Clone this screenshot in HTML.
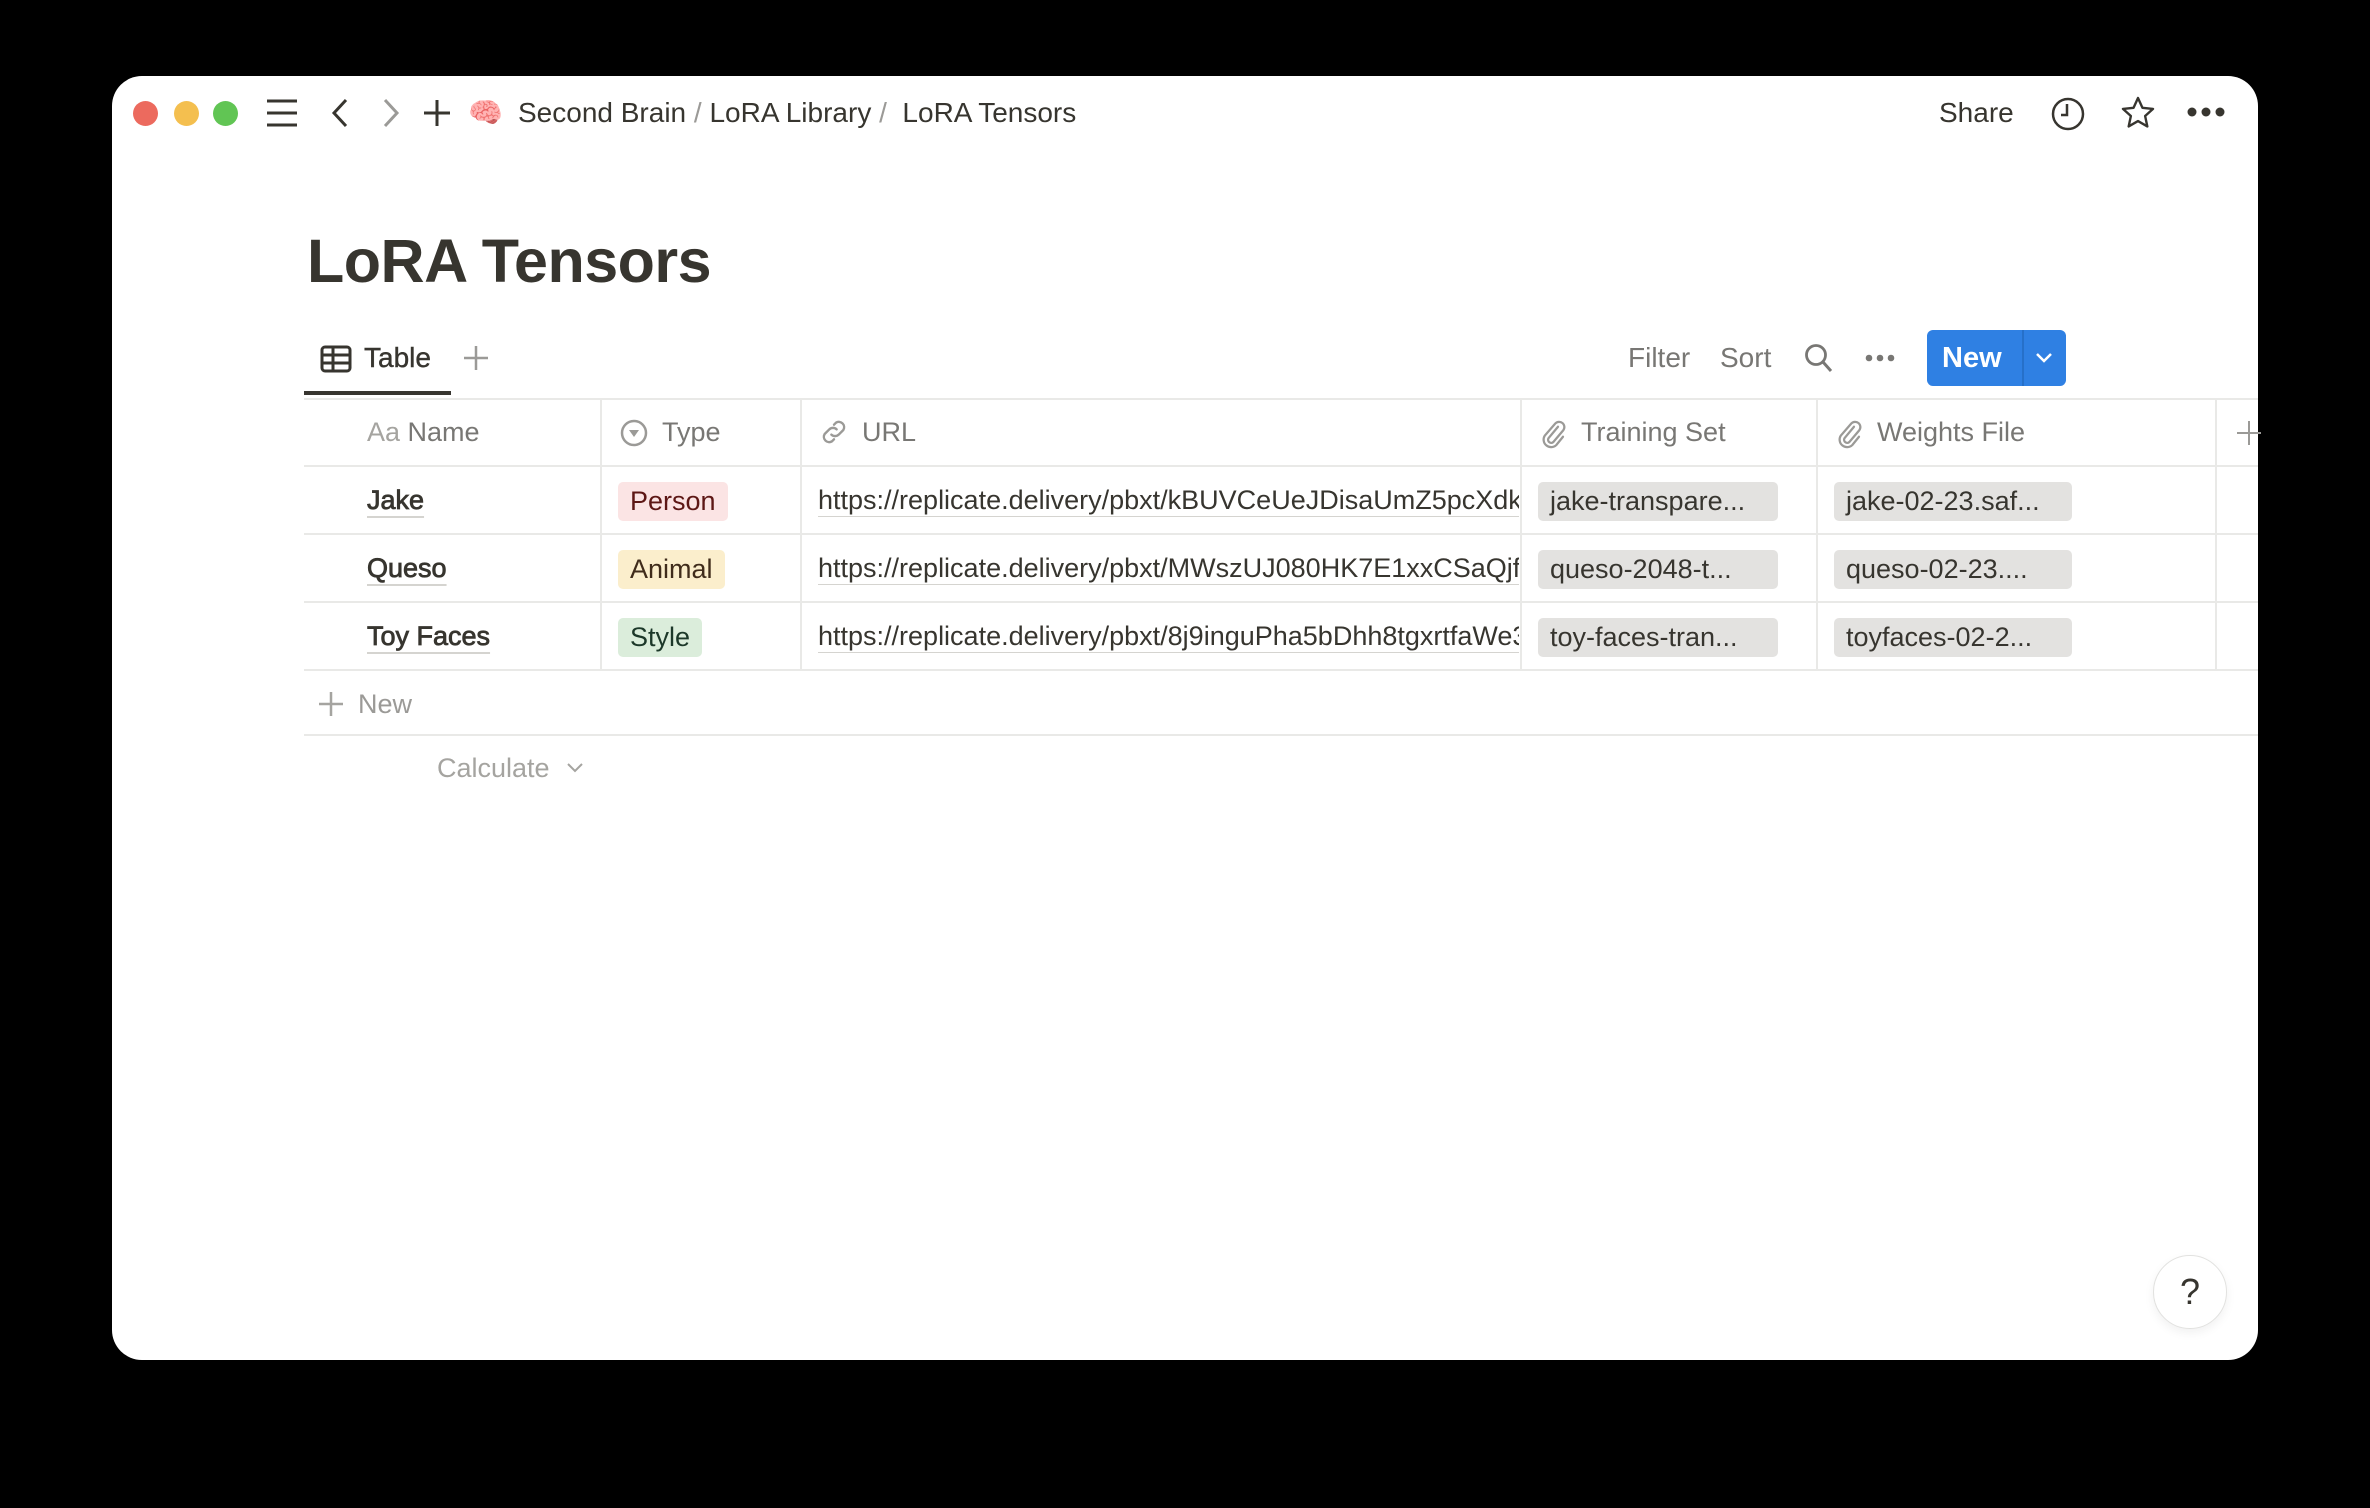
<!DOCTYPE html>
<html><head><meta charset="utf-8"><style>
*{margin:0;padding:0;box-sizing:border-box}
body{width:2370px;height:1508px;background:#000;position:relative;overflow:hidden;font-family:"Liberation Sans",sans-serif;color:#37352f}
#win{position:absolute;left:112px;top:76px;width:2146px;height:1284px;background:#fff;border-radius:30px;overflow:hidden}
.a{position:absolute;white-space:nowrap}
.dot{position:absolute;width:25px;height:25px;border-radius:50%;top:101px}
.t{font-size:28px;line-height:34px}
.hl{position:absolute;background:#e9e9e7}
.pill{position:absolute;height:39px;border-radius:5px;font-size:27px;line-height:39px;padding:0 12px}
.cell{font-size:27px;line-height:34px}
.nm{-webkit-text-stroke:0.8px #37352f;text-decoration:underline;text-decoration-color:#d5d4d0;text-decoration-thickness:2px;text-underline-offset:7px}
.url{text-decoration:underline;text-decoration-color:#d5d4d0;text-decoration-thickness:2px;text-underline-offset:7px;overflow:hidden;width:701px}
.hd{font-size:27px;color:#787774;line-height:34px}
</style></head><body>
<div id="win"></div>
<div class="dot" style="left:133px;background:#ec6a5e"></div>
<div class="dot" style="left:174px;background:#f4bf4f"></div>
<div class="dot" style="left:213px;background:#61c554"></div>
<svg class="a" style="left:265px;top:98px" width="34" height="30" viewBox="0 0 34 30"><path d="M2 3h30M2 15h30M2 27h30" stroke="#37352f" stroke-width="3"/></svg>
<svg class="a" style="left:330px;top:97px" width="20" height="32"><path d="M16 3L4 16l12 13" stroke="#37352f" stroke-width="3" fill="none"/></svg>
<svg class="a" style="left:381px;top:97px" width="20" height="32"><path d="M4 3l12 13L4 29" stroke="#9b9a97" stroke-width="3" fill="none"/></svg>
<svg class="a" style="left:422px;top:98px" width="30" height="30"><path d="M15 2v26M2 15h26" stroke="#37352f" stroke-width="3"/></svg>
<div class="a" style="left:468px;top:97px;font-size:28px;line-height:32px">🧠</div>
<div class="a t" style="left:518px;top:96px">Second Brain <span style="color:#9b9a97">/</span> LoRA Library <span style="color:#9b9a97">/</span>&nbsp; LoRA Tensors</div>
<div class="a t" style="left:1939px;top:96px">Share</div>
<svg class="a" style="left:2050px;top:96px" width="36" height="36"><circle cx="18" cy="18" r="15" stroke="#37352f" stroke-width="2.5" fill="none"/><path d="M17 8v11h-6" stroke="#37352f" stroke-width="2.5" fill="none"/></svg>
<svg class="a" style="left:2119px;top:94px" width="38" height="38" viewBox="0 0 24 24"><path d="M12 2.5l2.8 6.2 6.7.7-5 4.5 1.4 6.6L12 17.1l-5.9 3.4 1.4-6.6-5-4.5 6.7-.7z" stroke="#37352f" stroke-width="1.5" fill="none" stroke-linejoin="round"/></svg>
<svg class="a" style="left:2186px;top:106px" width="40" height="12"><circle cx="6" cy="6" r="4.5" fill="#37352f"/><circle cx="20" cy="6" r="4.5" fill="#37352f"/><circle cx="34" cy="6" r="4.5" fill="#37352f"/></svg>
<div class="a" style="left:307px;top:223px;font-size:61px;font-weight:bold;line-height:76px;letter-spacing:-0.5px">LoRA Tensors</div>
<svg class="a" style="left:320px;top:345px" width="32" height="28"><rect x="2" y="2" width="28" height="24" rx="3" stroke="#37352f" stroke-width="3" fill="none"/><path d="M2 10h28M2 18h28M13 2v24" stroke="#37352f" stroke-width="3"/></svg>
<div class="a" style="left:364px;top:341px;font-size:28px;line-height:34px;-webkit-text-stroke:0.4px #37352f">Table</div>
<svg class="a" style="left:463px;top:345px" width="26" height="26"><path d="M13 1v24M1 13h24" stroke="#9b9a97" stroke-width="2.5"/></svg>
<div class="hl" style="left:304px;top:391px;width:147px;height:4px;background:#37352f"></div>
<div class="a" style="left:1628px;top:341px;font-size:28px;line-height:34px;color:#787774">Filter</div>
<div class="a" style="left:1720px;top:341px;font-size:28px;line-height:34px;color:#787774">Sort</div>
<svg class="a" style="left:1804px;top:343px" width="30" height="32"><circle cx="12" cy="12" r="9.5" stroke="#787774" stroke-width="2.8" fill="none"/><path d="M19 19l8 9" stroke="#787774" stroke-width="3"/></svg>
<svg class="a" style="left:1865px;top:353px" width="30" height="10"><circle cx="4" cy="5" r="3.3" fill="#787774"/><circle cx="15" cy="5" r="3.3" fill="#787774"/><circle cx="26" cy="5" r="3.3" fill="#787774"/></svg>
<div class="a" style="left:1927px;top:330px;width:139px;height:56px;background:#2f80e3;border-radius:6px"></div>
<div class="a" style="left:2022px;top:330px;width:2px;height:56px;background:#2670c9"></div>
<div class="a" style="left:1942px;top:341px;font-size:29px;line-height:34px;color:#fff;font-weight:bold">New</div>
<svg class="a" style="left:2034px;top:351px" width="20" height="14"><path d="M3 3l7 7 7-7" stroke="#fff" stroke-width="2.5" fill="none"/></svg>
<div class="hl" style="left:304px;top:398px;width:1954px;height:2px"></div>
<div class="hl" style="left:304px;top:465px;width:1954px;height:2px"></div>
<div class="hl" style="left:304px;top:533px;width:1954px;height:2px"></div>
<div class="hl" style="left:304px;top:601px;width:1954px;height:2px"></div>
<div class="hl" style="left:304px;top:669px;width:1954px;height:2px"></div>
<div class="hl" style="left:304px;top:734px;width:1954px;height:2px"></div>
<div class="hl" style="left:600px;top:398px;width:2px;height:273px"></div>
<div class="hl" style="left:800px;top:398px;width:2px;height:273px"></div>
<div class="hl" style="left:1520px;top:398px;width:2px;height:273px"></div>
<div class="hl" style="left:1816px;top:398px;width:2px;height:273px"></div>
<div class="hl" style="left:2215px;top:398px;width:2px;height:273px"></div>
<div class="a hd" style="left:367px;top:415px"><span style="color:#a5a4a0">Aa</span> Name</div>
<svg class="a" style="left:619px;top:418px" width="30" height="30"><circle cx="15" cy="15" r="12" stroke="#9b9a97" stroke-width="2.5" fill="none"/><path d="M10 12h10l-5 7z" fill="#9b9a97"/></svg>
<div class="a hd" style="left:662px;top:415px">Type</div>
<svg class="a" style="left:818px;top:416px" width="32" height="32" viewBox="0 0 24 24"><path d="M10 14a4 4 0 0 0 5.5 0l3.5-3.5a4 4 0 0 0-5.5-5.5L12 6.5M14 10a4 4 0 0 0-5.5 0L5 13.5a4 4 0 0 0 5.5 5.5L12 17.5" stroke="#9b9a97" stroke-width="1.8" fill="none" stroke-linecap="round"/></svg>
<div class="a hd" style="left:862px;top:415px">URL</div>
<svg class="a" style="left:1538px;top:416px" width="30" height="34" viewBox="0 0 24 24"><path d="M16 7l-7.5 9a2.5 2.5 0 0 0 3.8 3.2l8-9.5a4.2 4.2 0 0 0-6.4-5.4L5.5 14a6 6 0 0 0 9.2 7.6L20 15" stroke="#9b9a97" stroke-width="1.8" fill="none" stroke-linecap="round"/></svg>
<div class="a hd" style="left:1581px;top:415px">Training Set</div>
<svg class="a" style="left:1834px;top:416px" width="30" height="34" viewBox="0 0 24 24"><path d="M16 7l-7.5 9a2.5 2.5 0 0 0 3.8 3.2l8-9.5a4.2 4.2 0 0 0-6.4-5.4L5.5 14a6 6 0 0 0 9.2 7.6L20 15" stroke="#9b9a97" stroke-width="1.8" fill="none" stroke-linecap="round"/></svg>
<div class="a hd" style="left:1877px;top:415px">Weights File</div>
<svg class="a" style="left:2236px;top:420px" width="26" height="26"><path d="M13 1v24M1 13h24" stroke="#9b9a97" stroke-width="2"/></svg>
<div class="a cell nm" style="left:367px;top:483px">Jake</div>
<div class="a cell nm" style="left:367px;top:551px">Queso</div>
<div class="a cell nm" style="left:367px;top:619px">Toy Faces</div>
<div class="pill" style="left:618px;top:482px;background:#fbe4e4;color:#5d1715">Person</div>
<div class="pill" style="left:618px;top:550px;background:#fbeecc;color:#402c1b">Animal</div>
<div class="pill" style="left:618px;top:618px;color:#1c3829;background:#dbeddb">Style</div>
<div class="a cell url" style="left:818px;top:483px">https://replicate.delivery/pbxt/kBUVCeUeJDisaUmZ5pcXdkw3</div>
<div class="a cell url" style="left:818px;top:551px">https://replicate.delivery/pbxt/MWszUJ080HK7E1xxCSaQjf</div>
<div class="a cell url" style="left:818px;top:619px">https://replicate.delivery/pbxt/8j9inguPha5bDhh8tgxrtfaWe3</div>
<div class="pill" style="left:1538px;top:482px;width:240px;background:#e3e2e0">jake-transpare...</div>
<div class="pill" style="left:1538px;top:550px;width:240px;background:#e3e2e0">queso-2048-t...</div>
<div class="pill" style="left:1538px;top:618px;width:240px;background:#e3e2e0">toy-faces-tran...</div>
<div class="pill" style="left:1834px;top:482px;width:238px;background:#e3e2e0">jake-02-23.saf...</div>
<div class="pill" style="left:1834px;top:550px;width:238px;background:#e3e2e0">queso-02-23....</div>
<div class="pill" style="left:1834px;top:618px;width:238px;background:#e3e2e0">toyfaces-02-2...</div>
<svg class="a" style="left:318px;top:691px" width="26" height="26"><path d="M13 1v24M1 13h24" stroke="#a5a4a0" stroke-width="2.5"/></svg>
<div class="a" style="left:358px;top:687px;font-size:27px;line-height:34px;color:#9b9a97">New</div>
<div class="a" style="left:437px;top:751px;font-size:27px;line-height:34px;color:#a5a4a0">Calculate</div>
<svg class="a" style="left:566px;top:762px" width="18" height="12"><path d="M2 2l7 7 7-7" stroke="#a5a4a0" stroke-width="2" fill="none"/></svg>
<div class="a" style="left:2153px;top:1255px;width:74px;height:74px;border-radius:50%;background:#fff;border:1.5px solid #e2e2e0;box-shadow:0 4px 10px rgba(0,0,0,0.06);text-align:center;font-size:36px;line-height:71px;color:#37352f">?</div>
</body></html>
